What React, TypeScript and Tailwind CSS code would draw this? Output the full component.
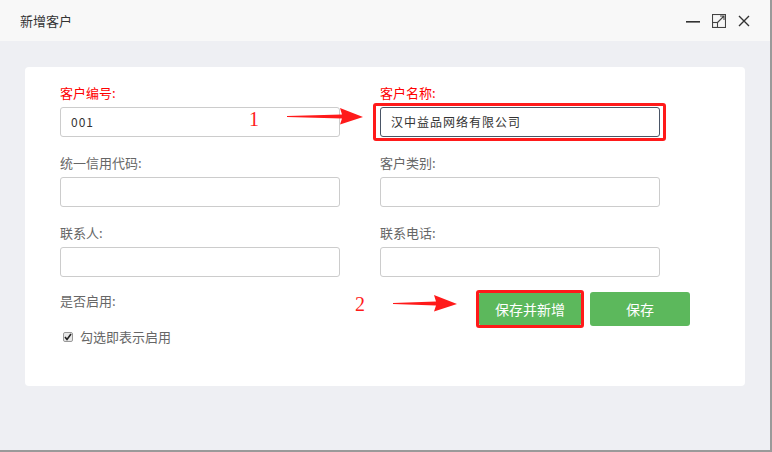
import React from "react";

const font = { fontFamily: '"Noto Sans CJK SC", "Liberation Sans", sans-serif' };

function Field({ label, red, value, focused }: { label: string; red?: boolean; value?: string; focused?: boolean }) {
  return (
    <div className="flex flex-col">
      <div className={`h-[20px] leading-[20px] text-[13px] ${red ? "text-[#ff0000]" : "text-[#666666]"}`}>{label}</div>
      <div
        className={`mt-[4px] h-[30px] rounded-[3px] border bg-white flex items-center pl-[10px] text-[12px] text-[#333333] ${
          focused ? "border-[#4a5566]" : "border-[#cccccc]"
        }`}
      >
        <span className="tracking-[1px]">{value}</span>
      </div>
    </div>
  );
}

function Arrow({ width }: { width: number }) {
  return (
    <svg width={width} height="20" viewBox={`0 0 ${width} 20`}>
      <polygon
        points={`0,9 ${width - 21},7.5 ${width - 23},1 ${width},10 ${width - 23},17.5 ${width - 21},11.5 0,10`}
        fill="#ff1a1a"
      />
    </svg>
  );
}

export default function App() {
  return (
    <div className="relative w-[772px] h-[452px] border-r-2 border-b-2 border-[#9a9a9a] bg-[#eeeff3]" style={font}>
      <div className="h-[41px] bg-[#f8f8f8] flex items-center justify-between pl-[20px] pr-[20px]">
        <span className="text-[13px] text-[#333333]">新增客户</span>
        <div className="flex items-center gap-[12px] text-[#333333]">
          <svg width="14" height="14" viewBox="0 0 14 14">
            <rect x="0" y="7" width="14" height="1.6" fill="#333" />
          </svg>
          <svg width="14" height="14" viewBox="0 0 14 14" fill="none" stroke="#444" strokeWidth="1.1">
            <rect x="0.5" y="0.5" width="13" height="13" />
            <rect x="0.5" y="8.5" width="5" height="5" />
            <path d="M5.5 8.5 L12 2 M8 2 H12 V6" />
          </svg>
          <svg width="12" height="12" viewBox="0 0 12 12" stroke="#333" strokeWidth="1.4">
            <path d="M1 1 L11 11 M11 1 L1 11" />
          </svg>
        </div>
      </div>
      <div className="ml-[25px] mt-[26px] w-[720px] h-[319px] bg-white rounded-[4px] pt-[16px] pl-[35px]">
        <div className="grid grid-cols-[280px_280px] gap-x-[40px] gap-y-[16px]">
          <Field label="客户编号:" red value="001" />
          <Field label="客户名称:" red value="汉中益品网络有限公司" focused />
          <Field label="统一信用代码:" />
          <Field label="客户类别:" />
          <Field label="联系人:" />
          <Field label="联系电话:" />
          <div className="flex flex-col -mt-[2px]">
            <div className="h-[20px] leading-[20px] text-[13px] text-[#666666]">是否启用:</div>
            <div className="mt-[16px] h-[20px] flex items-center pl-[3px] gap-[7px]">
              <div className="w-[10px] h-[10px] border border-[#999] rounded-[2px] bg-[#e8e8e8] flex items-center justify-center">
                <svg width="8" height="8" viewBox="0 0 8 8">
                  <path d="M1 4 L3 6.5 L7 1" stroke="#222" strokeWidth="1.6" fill="none" />
                </svg>
              </div>
              <span className="text-[13px] text-[#666666]">勾选即表示启用</span>
            </div>
          </div>
          <div className="flex items-start pl-[99px] -mt-[1px] gap-[9px] overflow-visible">
            <button className="shrink-0 w-[102px] h-[34px] rounded-[3px] bg-[#5cb85c] text-white text-[14px]">保存并新增</button>
            <button className="shrink-0 w-[100px] h-[34px] rounded-[3px] bg-[#5cb85c] text-white text-[14px]">保存</button>
          </div>
        </div>
      </div>

      {/* annotations */}
      <div className="absolute left-[373px] top-[103px] w-[293px] h-[38px] border-[3px] border-[#ff1a1a] rounded-[3px]" />
      <div className="absolute left-[476px] top-[290px] w-[108px] h-[38px] border-[3px] border-[#ff1a1a] rounded-[3px]" />
      <div
        className="absolute left-[249px] top-[107px] text-[20px] leading-[24px] text-[#ff1a1a]"
        style={{ fontFamily: '"Liberation Serif", serif' }}
      >
        1
      </div>
      <div
        className="absolute left-[355px] top-[292px] text-[20px] leading-[24px] text-[#ff1a1a]"
        style={{ fontFamily: '"Liberation Serif", serif' }}
      >
        2
      </div>
      <div className="absolute left-[287px] top-[107px]">
        <Arrow width={76} />
      </div>
      <div className="absolute left-[393px] top-[294px]">
        <Arrow width={64} />
      </div>
    </div>
  );
}
